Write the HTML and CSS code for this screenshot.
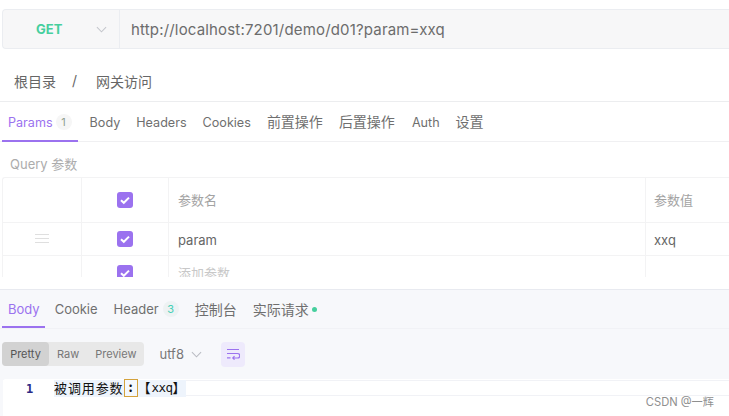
FILE: index.html
```html
<!DOCTYPE html>
<html lang="zh">
<head>
<meta charset="utf-8">
<title>Apifox</title>
<link rel="stylesheet" href="styles.css">
</head>
<body>
<div class="page">
  <section class="request">
    <div class="urlbar">
      <div class="method"><span class="get">GET</span>
        <svg class="chev" width="11" height="7" viewBox="0 0 12 7"><path d="M1 1l5 5 5-5" fill="none" stroke="#c4c6cc" stroke-width="1.1"/></svg>
      </div>
      <div class="url">http://localhost:7201/demo/d01?param=xxq</div>
    </div>
    <div class="crumbs"><span>根目录</span><span class="sep">/</span><span class="crumb2">网关访问</span></div>
    <nav class="tabs reqtabs">
      <span class="tab active">Params<i class="badge">1</i></span>
      <span class="tab">Body</span>
      <span class="tab">Headers</span>
      <span class="tab">Cookies</span>
      <span class="tab cn">前置操作</span>
      <span class="tab cn">后置操作</span>
      <span class="tab auth">Auth</span>
      <span class="tab cn">设置</span>
    </nav>
    <div class="qlabel">Query 参数</div>
    <div class="table">
      <div class="row head">
        <div class="cell c1"></div>
        <div class="cell c2"><svg class="check" width="16" height="16" viewBox="0 0 16 16"><rect width="16" height="16" rx="3" fill="#9b72ef"/><path d="M4 8.2l2.8 2.6L12 5.6" fill="none" stroke="#fff" stroke-width="2"/></svg></div>
        <div class="cell c3 muted">参数名</div>
        <div class="cell c4 muted">参数值</div>
      </div>
      <div class="row body">
        <div class="cell c1"><svg class="handle" width="14" height="9" viewBox="0 0 14 9"><path d="M0 .5h14M0 4.5h14M0 8.5h14" stroke="#dfdfdf"/></svg></div>
        <div class="cell c2"><svg class="check" width="16" height="16" viewBox="0 0 16 16"><rect width="16" height="16" rx="3" fill="#9b72ef"/><path d="M4 8.2l2.8 2.6L12 5.6" fill="none" stroke="#fff" stroke-width="2"/></svg></div>
        <div class="cell c3 val">param</div>
        <div class="cell c4 val">xxq</div>
      </div>
      <div class="row last">
        <div class="cell c1"></div>
        <div class="cell c2"><svg class="check" width="16" height="16" viewBox="0 0 16 16"><rect width="16" height="16" rx="3" fill="#9b72ef"/><path d="M4 8.2l2.8 2.6L12 5.6" fill="none" stroke="#fff" stroke-width="2"/></svg></div>
        <div class="cell c3 faint">添加参数</div>
        <div class="cell c4"></div>
      </div>
    </div>
  </section>
  <section class="response">
    <nav class="tabs restabs">
      <span class="tab active">Body</span>
      <span class="tab">Cookie</span>
      <span class="tab">Header<i class="badge green">3</i></span>
      <span class="tab cn">控制台</span>
      <span class="tab cn">实际请求<i class="dot"></i></span>
    </nav>
    <div class="toolbar">
      <div class="seg"><span class="seg-item on">Pretty</span><span class="seg-item">Raw</span><span class="seg-item">Preview</span></div>
      <div class="enc">utf8<svg width="11" height="7" viewBox="0 0 12 7"><path d="M1 1l5 5 5-5" fill="none" stroke="#b9bbc2" stroke-width="1.1"/></svg></div>
      <div class="wrap"><svg width="14" height="12" viewBox="0 0 14 12"><path d="M1 1.5h12M1 5.5h10.5a2 2 0 0 1 0 4.5H7M1 9.8h3.5M8.5 8.2L6.8 10l1.7 1.6" fill="none" stroke="#9b72ef" stroke-width="1.2"/></svg></div>
    </div>
    <div class="editor">
      <div class="line"><span class="num">1</span><code class="code"><span class="cjk">被调用参数</span><span class="colon">:</span><span class="cjk">【</span><span class="lat">xxq</span><span class="cjk">】</span></code></div>
    </div>
  </section>
  <div class="mark">CSDN @一辉</div>
</div>
</body>
</html>
```
FILE: styles.css
```css
* { box-sizing: border-box; }
html, body { margin: 0; height: 100%; }
body { background: #fff; overflow: hidden; font-family: Inter, "Noto Sans CJK SC", sans-serif; color: #666; }
.page { position: relative; width: 729px; height: 416px; overflow: hidden; display: flex; flex-direction: column; }
.request { height: 289px; padding-top: 9px; overflow: hidden; flex: none; }
.urlbar { margin-left: 2px; height: 40px; display: flex; background: #f7f7f8; border: 1px solid #ebedf1; border-right: 0; border-radius: 4px 0 0 4px; }
.method { width: 117px; flex: none; display: flex; align-items: center; border-right: 1px solid #ebedf1; padding-left: 33px; }
.get { font-size: 13px; font-weight: 700; color: #46cf9e; width: 60px; }
.url { padding: 1px 0 0 11px; font-size: 15px; line-height: 38px; color: #6c6c6c; letter-spacing: .17px; }
.crumbs { height: 53px; padding: 11px 0 0 14px; display: flex; align-items: center; font-size: 14px; color: #666; border-bottom: 1px solid #ecedef; }
.sep { margin-left: 16px; }
.crumb2 { margin-left: 19px; font-size: 14px; }
.tabs { display: flex; align-items: stretch; font-size: 12.6px; color: #6f6f6f; }
.tab { position: relative; display: flex; align-items: center; white-space: nowrap; padding-top: 1px; }
.tab.cn { font-size: 14px; padding: 0 0 1px; }
.reqtabs { height: 40px; padding-left: 2px; gap: 16px; border-bottom: 1px solid #f0f0f2; }
.reqtabs .tab:first-child { padding: 1px 6px 0; margin-right: -4px; }
.auth { margin: 0 0 0 1px; }
.tab.active { color: #9b72ef; }
.tab.active::after { content: ""; position: absolute; left: 0; right: 0; bottom: -1px; height: 2px; background: #9b72ef; }
.badge { font-style: normal; font-size: 11px; width: 16px; height: 16px; border-radius: 50%; margin-left: 3px; background: #f6f6f6; color: #8f9e8f; display: flex; align-items: center; justify-content: center; }
.badge.green { background: #edf2f3; color: #46cfb6; margin-left: 4px; }
.qlabel { height: 35px; padding: 6px 0 0 10px; line-height: 33px; font-size: 13px; color: #acacac; }
.table { height: 100px; overflow: hidden; margin-left: 2px; border: 1px solid #f3f3f4; border-bottom: 0; border-right: 0; border-radius: 3px 0 0 0; }
.row { display: flex; border-bottom: 1px solid #f3f3f4; }
.head { height: 45px; }
.body { height: 33px; }
.last { height: 33px; border-bottom: 0; }
.cell { display: flex; align-items: center; border-right: 1px solid #f3f3f4; font-size: 13px; color: #666; padding-left: 9px; flex: none; }
.c1 { width: 79px; justify-content: center; padding: 0; }
.c2 { width: 87px; justify-content: center; padding: 0; }
.c3 { width: 477px; }
.c4 { flex: 1; border-right: 0; padding-left: 8px; }
.handle { margin-bottom: 2px; }
.muted { color: #a3a3a3; padding-bottom: 2px; }
.val { padding-top: 2px; }
.faint { color: #c8c8c8; }
.response { flex: 1; background: #f7f8fb; border-top: 1px solid #e8eaf0; }
.restabs { height: 39px; padding-left: 2px; gap: 16px; font-size: 13px; border-bottom: 1px solid #f1f2f6; }
.restabs .tab { padding-top: 0; }
.restabs .tab.cn { padding: 0; }
.restabs .tab:first-child { padding: 0 5px 0 6px; margin-right: -6px; }
.restabs .active::after { bottom: 0; }
.dot { width: 5px; height: 5px; border-radius: 50%; background: #46cf9e; margin-left: 3px; }
.toolbar { display: flex; align-items: center; height: 50px; padding-left: 2px; }
.seg { display: flex; height: 24px; background: #e8e8e8; border-radius: 4px; font-size: 11px; color: #777; }
.seg-item { padding: 0 8px; display: flex; align-items: center; }
.seg-item.on { background: #d2d2d2; color: #555; border-radius: 4px; width: 47px; justify-content: center; padding: 0; }
.enc { display: flex; align-items: center; gap: 7px; margin-left: 15px; font-size: 13px; color: #777; width: 62px; }
.wrap { width: 24px; height: 25px; background: #eeeafc; border-radius: 4px; display: flex; align-items: center; justify-content: center; }
.editor { margin-left: 3px; height: 40px; background: #fff; border-radius: 3px 0 0 0; padding-top: 1px; }
.line { display: flex; height: 16px; background: #fff; border-top: 1px solid #f1f2f6; border-bottom: 1px solid #f1f2f6; }
.num { width: 51px; text-align: center; padding-left: 2px; font: 700 12px/18px "DejaVu Sans Mono", monospace; color: #2a2a86; flex: none; background: #fff; margin: -1px 0; }
.code { display: flex; height: 17px; margin-top: -1px; font: 13px/15px "Noto Sans CJK SC", "DejaVu Sans Mono", monospace; color: #111; background: #eef4fc; }
.cjk { letter-spacing: .9px; }
.colon { width: 14px; height: 18px; margin-top: -1px; border: 1px solid #d4a23c; text-align: center; font-weight: 700; line-height: 14px; background: #f4f8fd; }
.lat { font-family: "DejaVu Sans Mono", monospace; font-size: 12.5px; letter-spacing: -.5px; }
.mark { position: absolute; right: 15px; top: 393px; font-size: 11.2px; color: #8f8f8f; }
```
